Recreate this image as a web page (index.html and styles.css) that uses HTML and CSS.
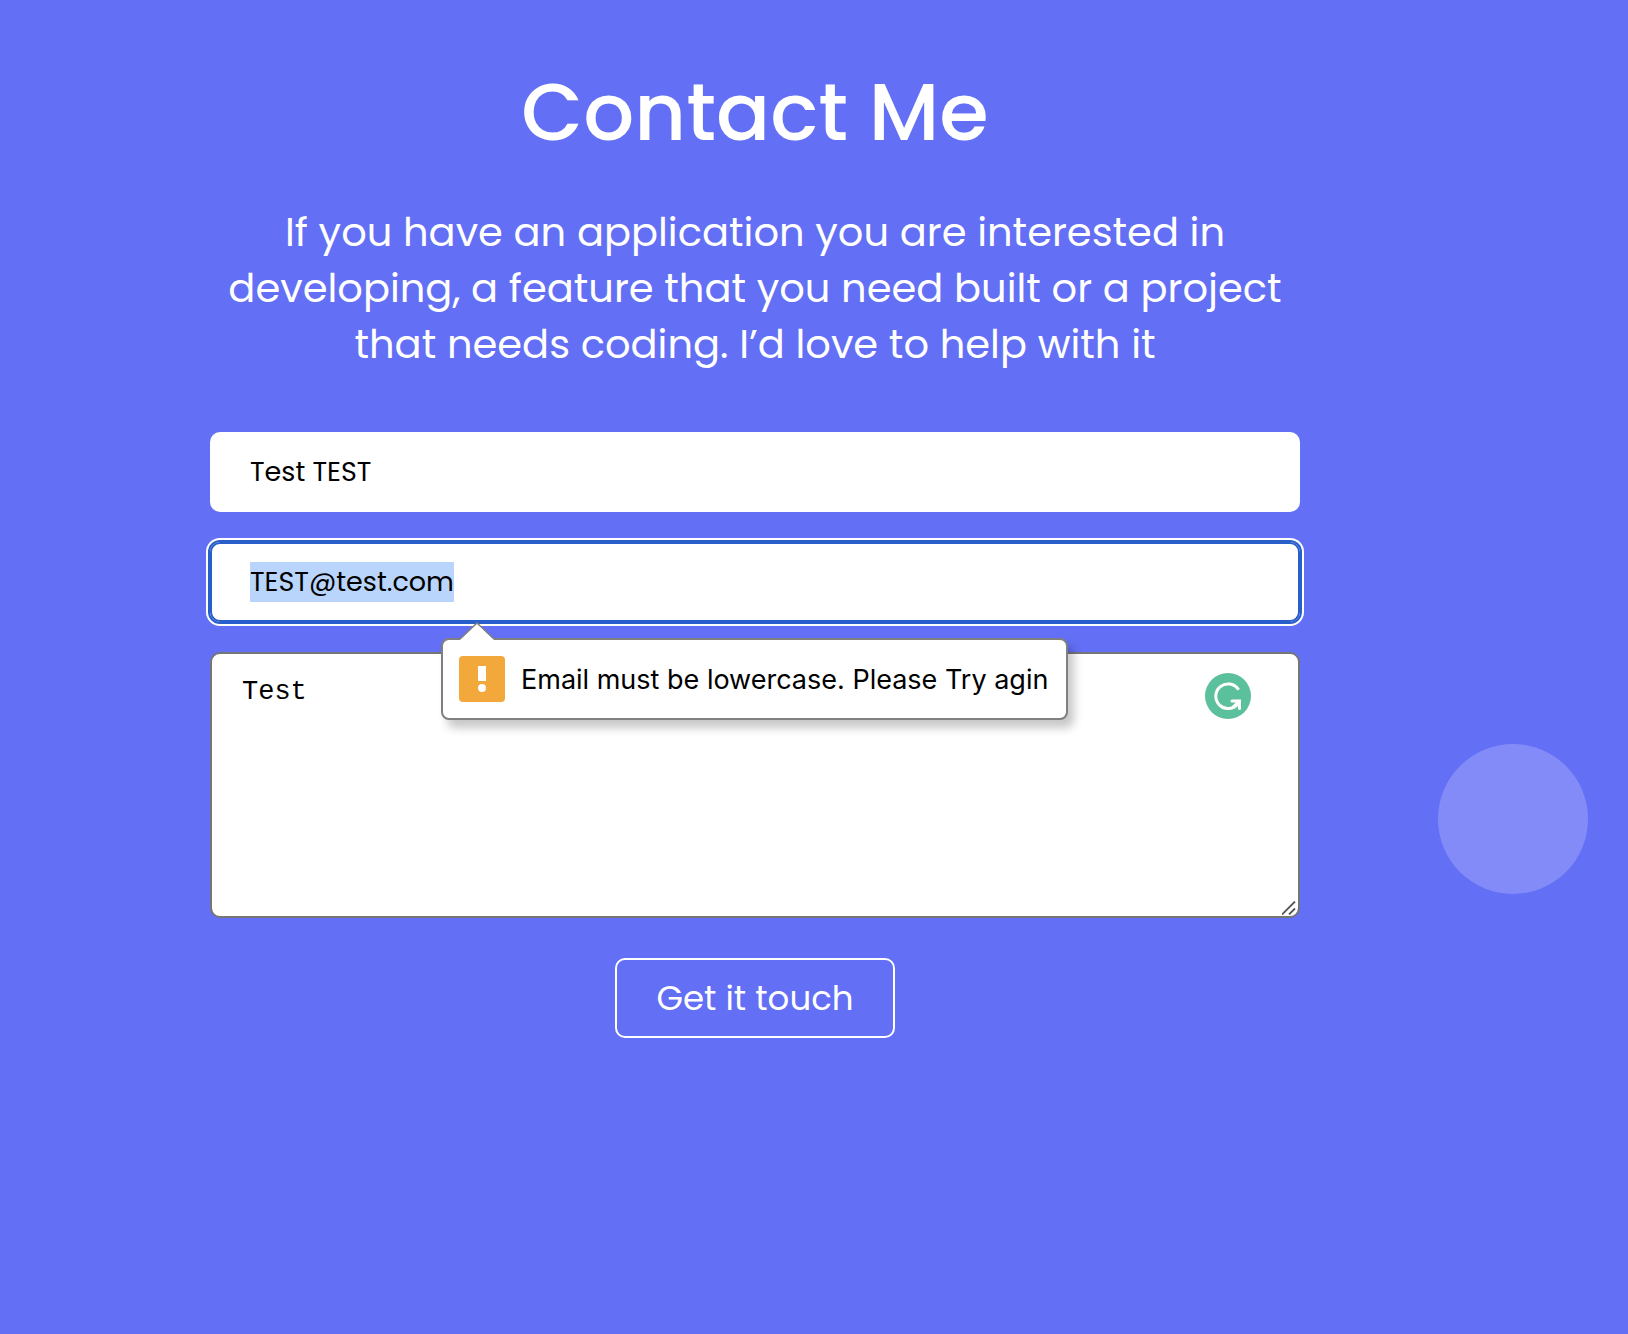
FILE: index.html
```html
<!DOCTYPE html>
<html lang="en">
<head>
<meta charset="utf-8">
<meta name="viewport" content="width=device-width, initial-scale=1">
<title>Contact Me</title>
<link rel="stylesheet" href="styles.css">
</head>
<body>
<main class="contact">
  <h1 class="title">Contact Me</h1>
  <p class="intro">If you have an application you are interested in developing, a feature that you need built or a project that needs coding. I’d love to help with it</p>
  <form class="form" novalidate>
    <input class="field" type="text" name="name" aria-label="Name" value="Test TEST">
    <div class="email">
      <input class="field" id="email" type="text" inputmode="email" name="email" aria-label="Email" aria-describedby="email-error" value="TEST@test.com" spellcheck="false" autofocus>
      <div class="bubble" id="email-error" role="alert">
        <svg class="bubble-arrow" width="34" height="18" viewBox="0 0 34 18" aria-hidden="true"><path d="M0 18 17 1 34 18Z" fill="#fff"/><path d="M1 16 17 1 33 16" fill="none" stroke="#808080" stroke-width="1.5"/></svg>
        <svg class="bubble-icon" width="46" height="46" viewBox="0 0 46 46" aria-hidden="true"><rect width="46" height="46" rx="4" fill="#f2a83b"/><path d="M19 10h8v15h-8z" fill="#fff"/><circle cx="23" cy="32" r="4" fill="#fff"/></svg>
        <span>Email must be lowercase. Please Try agin</span>
      </div>
    </div>
    <div class="message">
      <textarea class="message-text" name="message" aria-label="Message" spellcheck="false">Test</textarea>
      <svg class="assistant" width="46" height="46" viewBox="0 0 46 46" aria-hidden="true"><circle cx="23" cy="23" r="23" fill="#5bc09c"/><path d="M33.6 16.8A12.3 12.3 0 1 0 33 30.5" fill="none" stroke="#fff" stroke-width="3"/><path d="M27 28h7.500v7.500" fill="none" stroke="#fff" stroke-width="3" stroke-linecap="round"/><path d="M28 34l6-6" stroke="#fff" stroke-width="2.500"/></svg>
      <svg class="grip" width="14" height="14" viewBox="0 0 14 14" aria-hidden="true"><path d="M0 13.500 13 .5M7 13.500 13 7.500" fill="none" stroke="#555" stroke-width="1.800"/></svg>
    </div>
    <button class="submit" type="submit">Get it touch</button>
  </form>
</main>
<div class="cursor-dot"></div>
<script src="script.js"></script>
</body>
</html>
```
FILE: styles.css
```css
* {
  box-sizing: border-box;
}

body {
  margin: 0;
  min-height: 100vh;
  padding: 60px 118px 60px 0;
  background: #636ff5;
  color: #fff;
  font-family: Poppins, Inter, sans-serif;
}

.contact {
  width: 100%;
  max-width: 1090px;
  margin: 0 auto;
}

.title {
  margin: 0;
  font-size: 80px;
  font-weight: 500;
  line-height: 104px;
  text-align: center;
}

.intro {
  margin: 40px 0 60px;
  font-size: 40px;
  line-height: 56px;
  text-align: center;
}

.form {
  display: flex;
  flex-direction: column;
  gap: 30px;
}

.field {
  display: block;
  width: 100%;
  height: 80px;
  padding: 0 40px;
  border: 0;
  border-radius: 10px;
  outline: none;
  background: #fff;
  color: #000;
  font-family: inherit;
  font-size: 27px;
  line-height: 40px;
}

.field:focus {
  box-shadow: inset 0 0 0 2px #285fcb, 0 0 0 2px #285fcb, 0 0 0 4px #fff;
}

.field::selection {
  background: #b9d5fb;
  color: #000;
}

.email,
.message {
  position: relative;
}

.bubble {
  position: absolute;
  z-index: 1;
  top: 96px;
  left: 231px;
  display: flex;
  align-items: center;
  gap: 16px;
  height: 82px;
  padding: 0 18px 0 16px;
  border: 2px solid #808080;
  border-radius: 8px;
  background: #fff;
  box-shadow: 6px 8px 10px rgba(0, 0, 0, 0.22);
  color: #000;
  font-family: Inter, sans-serif;
  font-size: 27px;
  white-space: nowrap;
}

.bubble-arrow {
  position: absolute;
  top: -18px;
  left: 17px;
}

.message-text {
  display: block;
  width: 100%;
  height: 266px;
  padding: 22px 30px;
  border: 2px solid #767676;
  border-radius: 10px;
  outline: none;
  resize: none;
  background: #fff;
  color: #000;
  font-family: Courier, "Liberation Mono", monospace;
  font-size: 27px;
  line-height: 32px;
}

.assistant {
  position: absolute;
  top: 21px;
  right: 49px;
}

.grip {
  position: absolute;
  right: 4px;
  bottom: 3px;
}

.submit {
  align-self: center;
  height: 80px;
  margin-top: 10px;
  padding: 0 39px;
  border: 2px solid #fff;
  border-radius: 10px;
  background: transparent;
  color: #fff;
  font-family: inherit;
  font-size: 34px;
}

.cursor-dot {
  position: absolute;
  top: 744px;
  right: 40px;
  width: 150px;
  height: 150px;
  border-radius: 50%;
  background: rgba(255, 255, 255, 0.2);
  pointer-events: none;
}
```
FILE: script.js
```js
const email = document.getElementById("email");
email.focus();
email.select();
```
